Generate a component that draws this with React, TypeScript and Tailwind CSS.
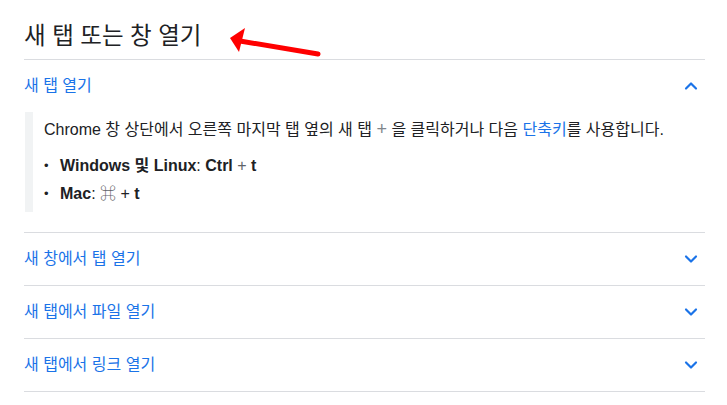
import { ChevronDown, ChevronUp } from "lucide-react"

const COLLAPSED = ["새 창에서 탭 열기", "새 탭에서 파일 열기", "새 탭에서 링크 열기"]

function Arrow() {
  return (
    <svg className="absolute left-[224px] top-[24px]" width="100" height="36" viewBox="0 0 100 36">
      <line x1="16" y1="17" x2="94" y2="30" stroke="#ff0000" strokeWidth="5" strokeLinecap="round" />
      <polygon points="6,14 21,4 15,28" fill="#ff0000" />
    </svg>
  )
}

export default function App() {
  return (
    <div
      className="relative w-[727px] h-[405px] bg-white text-[#202124]"
      style={{ fontFamily: '"Liberation Sans", "Noto Sans CJK KR", sans-serif' }}
    >
      <div className="w-[681px] ml-[24px]">
        {/* Title */}
        <div className="h-[60px] flex items-center pt-[12px] border-b border-[#dadce0]">
          <h1 className="text-[23.5px] leading-[28px] font-normal text-[#202124]">새 탭 또는 창 열기</h1>
        </div>
        <Arrow />

        {/* Expanded item */}
        <div className="border-b border-[#dadce0]">
          <div className="h-[52px] flex items-center justify-between">
            <span className="text-[16px] text-[#1a73e8]">새 탭 열기</span>
            <ChevronUp size={20} strokeWidth={2.6} className="text-[#1a73e8] mr-[4px]" />
          </div>
          <div className="mb-[20px] ml-[1px] border-l-[8px] border-[#f1f3f4] pl-[11px] pt-[6px] pb-[6px] text-[16px]">
            <p className="leading-[24px]">
              Chrome 창 상단에서 오른쪽 마지막 탭 옆의 새 탭 <span className="text-[#80868b] text-[18px] leading-[18px]">+</span> 을 클릭하거나 다음{" "}
              <span className="text-[#1a73e8]">단축키</span>를 사용합니다.
            </p>
            <ul className="mt-[12px] flex flex-col gap-[4px]">
              <li className="flex items-center leading-[24px]">
                <span className="w-[16px] text-[13px]">•</span>
                <span>
                  <b>Windows 및 Linux</b>: <b>Ctrl</b> <span className="text-[#5f6368]">+</span> <b>t</b>
                </span>
              </li>
              <li className="flex items-center leading-[24px]">
                <span className="w-[16px] text-[13px]">•</span>
                <span>
                  <b>Mac</b>: <span className="text-[#5f6368]">⌘</span> + <b>t</b>
                </span>
              </li>
            </ul>
          </div>
        </div>

        {/* Collapsed items */}
        {COLLAPSED.map((label) => (
          <div key={label} className="h-[53px] flex items-center justify-between border-b border-[#dadce0]">
            <span className="text-[16px] text-[#1a73e8]">{label}</span>
            <ChevronDown size={20} strokeWidth={2.6} className="text-[#1a73e8] mr-[4px]" />
          </div>
        ))}
      </div>
    </div>
  )
}
